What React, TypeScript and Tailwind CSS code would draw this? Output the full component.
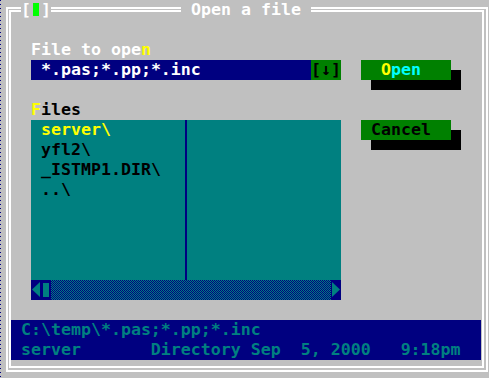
export default function App() {
  return (
    <div className="w-[489px] h-[378px] bg-[#c0c0c0] flex overflow-hidden font-['DejaVu_Sans_Mono',monospace] font-bold text-[16.6px] leading-[20px]">
      <div className="w-px h-full shrink-0 bg-[repeating-linear-gradient(to_bottom,#000080_0px,#000080_1px,transparent_1px,transparent_4px)]" />
      <div className="relative shrink-0 ml-[5px] mt-[7px] w-[482px] h-[365px] border-2 border-white">
        <div className="absolute left-[13px] top-[-9px] w-[30px] h-5 bg-[#c0c0c0] flex text-white">
          <span className="w-[10px]">[</span>
          <span className="w-[10px] h-5">
            <span className="block w-[6px] h-[13px] ml-[2px] mt-[3px] bg-[#00ff00]" />
          </span>
          <span className="w-[10px]">]</span>
        </div>
        <div className="absolute left-[173px] top-[-9px] w-[130px] h-5 bg-[#c0c0c0] text-white whitespace-pre">
          {" Open a file "}
        </div>
        <div className="ml-px mt-px w-[475px] h-[358px] border-2 border-white flex flex-col">
          <div className="pl-[20px] pt-[28px] flex gap-[20px]">
            <div className="w-[310px] flex flex-col">
              <div className="h-5 text-white whitespace-pre">
                File to ope<span className="text-[#ffff00]">n</span>
              </div>
              <div className="h-5 flex">
                <div className="w-[280px] h-5 bg-[#000080] text-white whitespace-pre">{" *.pas;*.pp;*.inc"}</div>
                <div className="w-[30px] h-5 bg-[#008000] text-black whitespace-pre">[↓]</div>
              </div>
              <div className="h-5 mt-5 text-black">
                <span className="text-[#ffff00]">F</span>iles
              </div>
              <div className="h-[160px] flex">
                <div className="w-[154px] bg-[#008080] pl-[10px] flex flex-col whitespace-pre">
                  <div className="h-5 text-[#ffff00]">server\</div>
                  <div className="h-5 text-black">yfl2\</div>
                  <div className="h-5 text-black">_ISTMP1.DIR\</div>
                  <div className="h-5 text-black">..\</div>
                </div>
                <div className="w-[2px] bg-[#000080]" />
                <div className="flex-1 bg-[#008080]" />
              </div>
              <div className="h-5 flex">
                <div className="w-[10px] h-5 bg-[#000080]">
                  <svg width="10" height="20" viewBox="0 0 10 20">
                    <polygon points="9,2 1,9.5 9,17" fill="#008080" />
                  </svg>
                </div>
                <div className="w-[10px] h-5 bg-[#000080]">
                  <svg width="10" height="20" viewBox="0 0 10 20">
                    <rect x="2" y="3" width="6" height="14" fill="#008080" />
                  </svg>
                </div>
                <div className="flex-1 h-5 bg-[repeating-conic-gradient(#000080_0%_25%,#008080_0%_50%)] [background-size:2px_2px]" />
                <div className="w-[10px] h-5 bg-[#000080]">
                  <svg width="10" height="20" viewBox="0 0 10 20">
                    <polygon points="1,2 9,9.5 1,17" fill="#008080" />
                  </svg>
                </div>
              </div>
            </div>
            <div className="w-[100px] pt-5 flex flex-col">
              <div className="w-[90px] h-5 bg-[#008000] pl-[20px] shadow-[10px_10px_0_#000]">
                <span className="text-[#ffff00]">O</span>
                <span className="text-[#00ffff]">pen</span>
              </div>
              <div className="w-[90px] h-5 mt-[40px] bg-[#008000] pl-[10px] text-black shadow-[10px_10px_0_#000]">
                Cancel
              </div>
            </div>
          </div>
          <div className="mt-5 w-[470px] h-[40px] bg-[#000080] text-[#008080] pl-[10px] whitespace-pre">
            <div className="h-5">{"C:\\temp\\*.pas;*.pp;*.inc"}</div>
            <div className="h-5">{"server       Directory Sep  5, 2000   9:18pm"}</div>
          </div>
        </div>
      </div>
    </div>
  );
}
